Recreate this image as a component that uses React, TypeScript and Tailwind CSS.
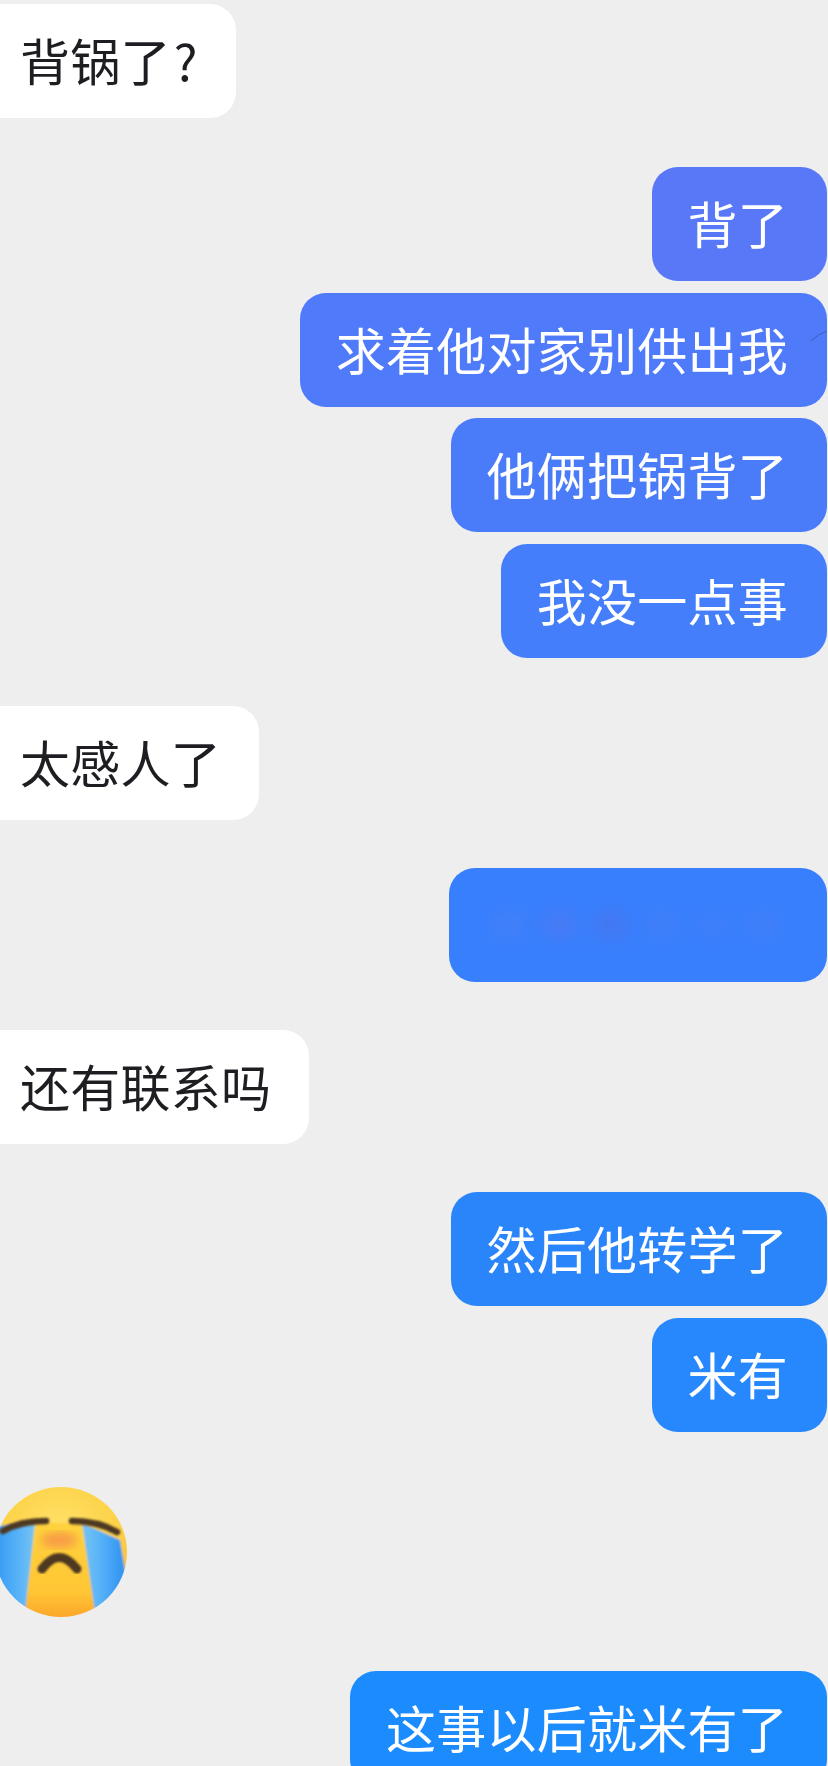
import type { ReactNode } from "react";

const font = "font-['Noto_Sans_CJK_SC','Noto_Sans',sans-serif]";

function Bubble({ text, color }: { text: string; color: string }) {
  return (
    <div className={`h-[114px] flex items-center rounded-[26px] pl-[36px] pr-[39px] pb-[3px] text-[50px] tracking-[0.25px] whitespace-nowrap text-white ${color}`}>
      {text}
    </div>
  );
}

function LeftBubble({ children }: { children: ReactNode }) {
  return (
    <div className="h-[114px] flex items-center rounded-[26px] bg-white -ml-[30px] pl-[50px] pr-[38px] pb-[3px] text-[50px] tracking-[0.25px] whitespace-nowrap text-[#1d1d22]">
      {children}
    </div>
  );
}

function BlurredBubble() {
  const marks = ["bg-[#4f7ff0]", "bg-[#5a76e8]", "bg-[#5470e0]", "bg-[#4a7ef2]", "bg-[#467df4]", "bg-[#4a7ef2]"];
  return (
    <div className="h-[114px] w-[378px] flex items-center justify-between rounded-[26px] bg-[#387ffe] pl-[40px] pr-[44px]">
      {marks.map((m, i) => (
        <span key={i} className={`w-[40px] h-[30px] rounded-full blur-[8px] opacity-40 ${m}`} />
      ))}
    </div>
  );
}

function CryingFace() {
  return (
    <svg width="140" height="136" viewBox="0 0 140 136" className="-ml-[10px] block">
      <defs>
        <radialGradient id="face" cx="50%" cy="35%" r="70%">
          <stop offset="0%" stopColor="#ffe26a" />
          <stop offset="60%" stopColor="#fdd248" />
          <stop offset="100%" stopColor="#f9a92c" />
        </radialGradient>
        <linearGradient id="chin" x1="0" y1="0" x2="0" y2="1">
          <stop offset="0%" stopColor="#ffd23e" />
          <stop offset="70%" stopColor="#ffc634" />
          <stop offset="100%" stopColor="#fba22a" />
        </linearGradient>
        <linearGradient id="tearL" x1="0" y1="0" x2="1" y2="0">
          <stop offset="0%" stopColor="#2a8ff0" />
          <stop offset="70%" stopColor="#5ab4f8" />
          <stop offset="100%" stopColor="#78c4f0" />
        </linearGradient>
        <linearGradient id="tearR" x1="0" y1="0" x2="1" y2="0">
          <stop offset="0%" stopColor="#78c4f0" />
          <stop offset="35%" stopColor="#5ab4f8" />
          <stop offset="100%" stopColor="#2a8ff0" />
        </linearGradient>
        <clipPath id="round">
          <ellipse cx="71" cy="67" rx="66" ry="65" />
        </clipPath>
        <filter id="soft">
          <feGaussianBlur stdDeviation="1" />
        </filter>
        <filter id="blush">
          <feGaussianBlur stdDeviation="5" />
        </filter>
      </defs>
      <g clipPath="url(#round)" filter="url(#soft)">
        <rect width="140" height="136" fill="url(#face)" />
        <rect x="30" y="38" width="80" height="98" fill="url(#chin)" />
        <path d="M45 38 L35 128 L-4 112 L-4 42 Z" fill="url(#tearL)" />
        <path d="M92 38 L105 128 L138 104 L130 55 Z" fill="url(#tearR)" />
      </g>
      <ellipse cx="69" cy="55" rx="18" ry="8" fill="#f58a4a" opacity="0.75" filter="url(#blush)" />
      <g fill="none" stroke="#4d3722" strokeLinecap="round" filter="url(#soft)">
        <path d="M13 46 Q30 36 56 36" strokeWidth="6.5" />
        <path d="M82 36 Q108 36 127 47" strokeWidth="6.5" />
        <path d="M52 84 Q69 61 87 84" strokeWidth="9" />
      </g>
    </svg>
  );
}

export default function App() {
  return (
    <div className={`w-[828px] h-[1766px] overflow-hidden bg-[#eeeeee] pt-[4px] flex flex-col ${font}`}>
      <div className="flex items-start">
        <LeftBubble>
          背锅了<span className="ml-[3px]">?</span>
        </LeftBubble>
      </div>

      <div className="relative mt-[49px] flex flex-col items-end gap-[11.7px] pr-px">
        <Bubble text="背了" color="bg-[#5878f8]" />
        <Bubble text="求着他对家别供出我" color="bg-[#4f7afa]" />
        <Bubble text="他俩把锅背了" color="bg-[#4a7cfa]" />
        <Bubble text="我没一点事" color="bg-[#457efa]" />
        <svg width="18" height="12" viewBox="0 0 18 12" className="absolute right-0 top-[163px]">
          <path d="M1 11 Q8 4 17 1" fill="none" stroke="#3f5bb0" strokeWidth="1" />
        </svg>
      </div>

      <div className="mt-[48px] flex items-start">
        <LeftBubble>太感人了</LeftBubble>
      </div>

      <div className="mt-[48px] flex justify-end pr-px">
        <BlurredBubble />
      </div>

      <div className="mt-[48px] flex items-start">
        <LeftBubble>还有联系吗</LeftBubble>
      </div>

      <div className="mt-[48px] flex flex-col items-end gap-[11.7px] pr-px">
        <Bubble text="然后他转学了" color="bg-[#2a85fb]" />
        <Bubble text="米有" color="bg-[#2688fc]" />
      </div>

      <div className="mt-[53px]">
        <CryingFace />
      </div>

      <div className="mt-[50px] flex justify-end pr-px">
        <Bubble text="这事以后就米有了" color="bg-[#1c8bfe]" />
      </div>
    </div>
  );
}
